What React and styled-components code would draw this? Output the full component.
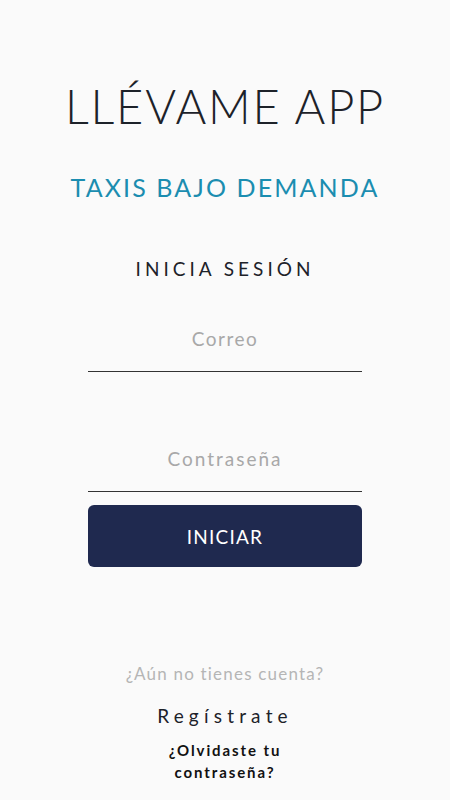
import React from "react";
import styled, { createGlobalStyle } from "styled-components";

const GlobalStyle = createGlobalStyle`
  body {
    margin: 0;
    background: #fafafa;
    font-family: "Lato", "Open Sans", sans-serif;
  }
`;

const Page = styled.div`
  width: 450px;
  height: 800px;
  display: flex;
  flex-direction: column;
  align-items: center;
  overflow: hidden;
`;

const Title = styled.h1`
  margin: 78px 0 0;
  font-size: 47px;
  font-weight: 300;
  letter-spacing: 1.8px;
  line-height: 56px;
  color: #1d2229;
`;

const Subtitle = styled.h2`
  margin: 38px 0 0;
  font-size: 25px;
  font-weight: 400;
  letter-spacing: 2.1px;
  line-height: 30px;
  color: #1b8db0;
`;

const SectionLabel = styled.div`
  margin-top: 55px;
  font-size: 19px;
  letter-spacing: 4px;
  line-height: 24px;
  color: #1d2229;
`;

const Form = styled.form`
  width: 274px;
  display: flex;
  flex-direction: column;
  margin-top: 46px;
`;

const Field = styled.input`
  border: none;
  border-bottom: 1px solid #333;
  background: transparent;
  text-align: center;
  font-family: "Lato", sans-serif;
  font-size: 19px;
  letter-spacing: ${(p) => p.$spacing || 1.5}px;
  padding: 0 0 21px;
  margin-top: ${(p) => p.$gap || 0}px;
  outline: none;
  &::placeholder {
    color: #a8a8a8;
  }
`;

const Button = styled.button`
  margin-top: 13px;
  height: 62px;
  border: none;
  border-radius: 6px;
  background: #1f294f;
  color: #fff;
  font-family: "Lato", sans-serif;
  font-size: 19px;
  letter-spacing: 1.2px;
`;

const Footer = styled.div`
  display: flex;
  flex-direction: column;
  align-items: center;
  margin-top: 96px;
`;

const Muted = styled.div`
  font-size: 17px;
  letter-spacing: 1.2px;
  color: #b5b5b5;
`;

const Link = styled.a`
  margin-top: 20px;
  font-size: 19px;
  letter-spacing: 5.2px;
  color: #1d2229;
`;

const Forgot = styled.a`
  margin-top: 12px;
  width: 150px;
  text-align: center;
  font-size: 15px;
  font-weight: 700;
  letter-spacing: 1.9px;
  line-height: 22px;
  color: #111;
`;

export default function App() {
  return (
    <Page>
      <GlobalStyle />
      <Title>LLÉVAME APP</Title>
      <Subtitle>TAXIS BAJO DEMANDA</Subtitle>
      <SectionLabel>INICIA SESIÓN</SectionLabel>
      <Form onSubmit={(e) => e.preventDefault()}>
        <Field type="email" placeholder="Correo" />
        <Field type="password" placeholder="Contraseña" $gap={75} $spacing={2} />
        <Button type="submit">INICIAR</Button>
      </Form>
      <Footer>
        <Muted>¿Aún no tienes cuenta?</Muted>
        <Link>Regístrate</Link>
        <Forgot>¿Olvidaste tu contraseña?</Forgot>
      </Footer>
    </Page>
  );
}
